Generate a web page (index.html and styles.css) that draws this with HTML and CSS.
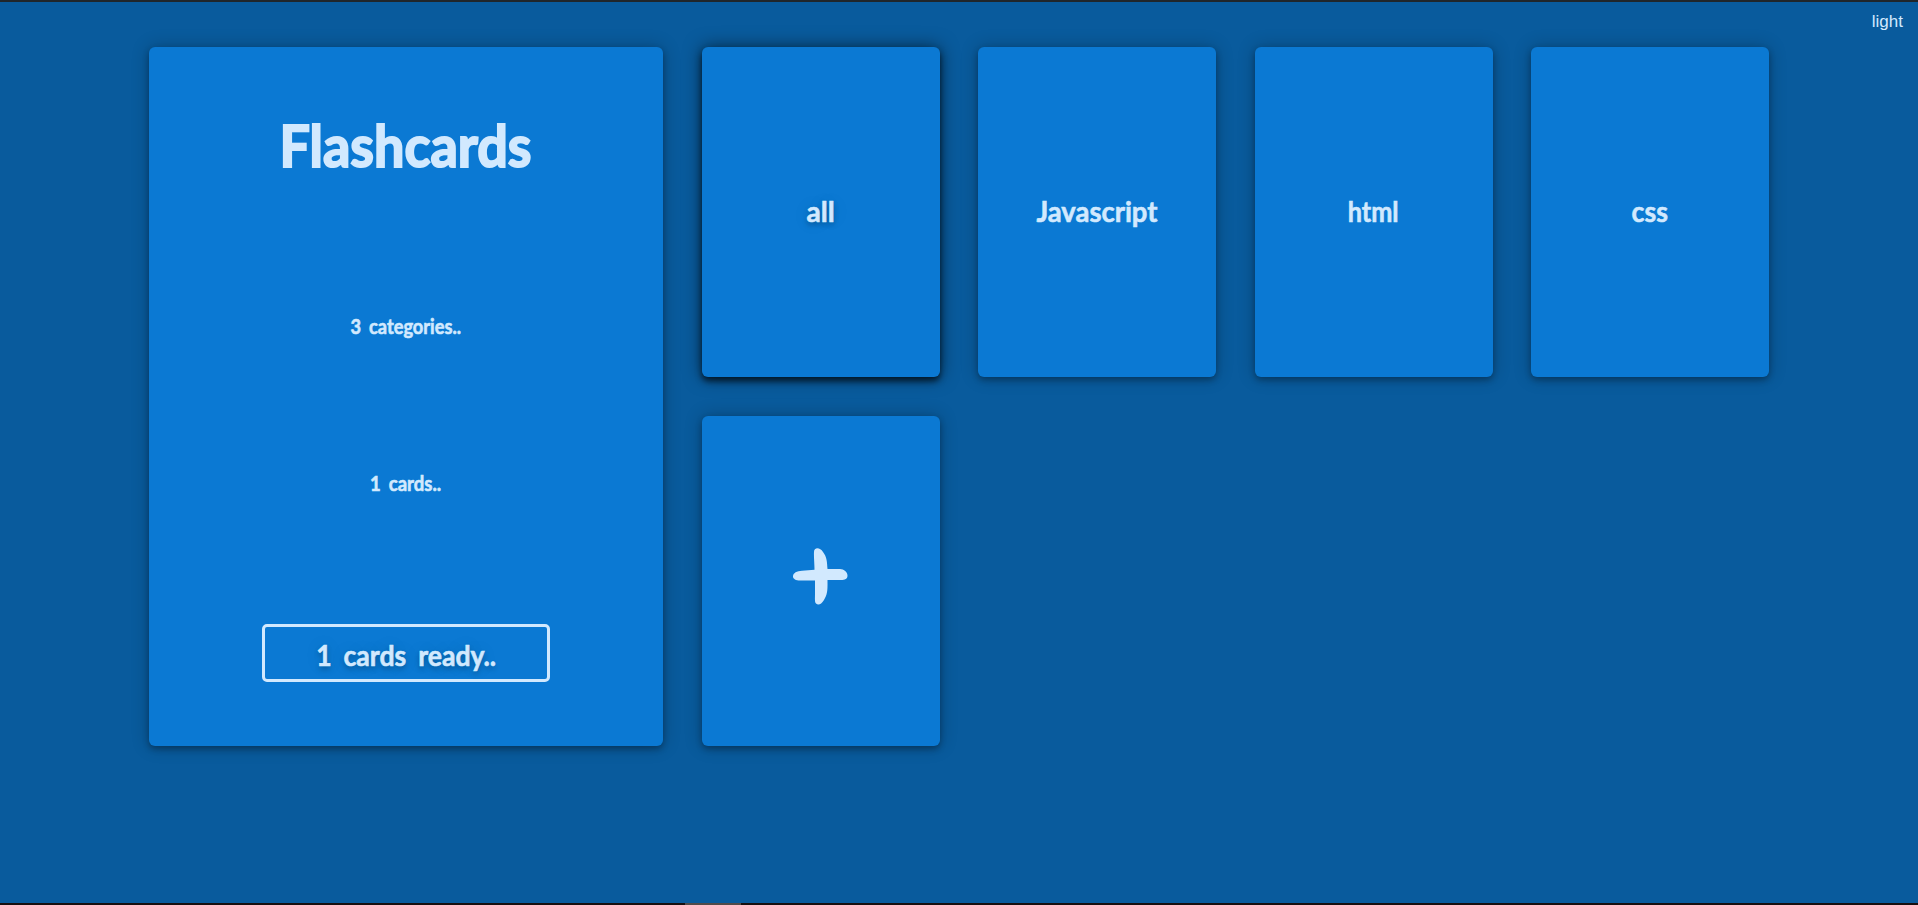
FILE: index.html
```html
<!DOCTYPE html>
<html lang="en">
<head>
<meta charset="utf-8">
<title>Flashcards</title>
<link rel="stylesheet" href="styles.css">
</head>
<body>
<div class="app">
  <header class="topbar"><button class="theme">light</button></header>
  <main class="board">
    <section class="card summary">
      <h1 class="title"><span class="label label-title">Flashcards</span></h1>
      <p class="count"><span class="label label-categories">3 categories..</span></p>
      <p class="count count-cards"><span class="label label-cards">1 cards..</span></p>
      <button class="ready"><span class="label label-ready">1 cards ready..</span></button>
    </section>
    <article class="card category selected"><span class="label label-all">all</span></article>
    <article class="card category"><span class="label label-js">Javascript</span></article>
    <article class="card category"><span class="label label-html">html</span></article>
    <article class="card category"><span class="label label-css">css</span></article>
    <article class="card add">
      <svg class="plus" viewBox="0 0 55 57" aria-label="Add category"><path d="M21 4C21-1 27-1 30 4C34 9 34 14 34.500 21H47C51 21 54.500 24 54.500 27.500C54.500 31 52 32 48 32H34.500C34.500 40 35 46 31 52C28 57 25 57.500 23 55.500C21.500 54 22 50 22 46V32.500H7C3 32.500 0 31 0 28.500C0 25 4 23 9 22.800L21.500 21.800C21.500 15 20.700 9 21 4Z"/></svg>
    </article>
  </main>
  <footer class="edge"><span class="edge-tab"></span></footer>
</div>
</body>
</html>
```
FILE: styles.css
```css
* { box-sizing: border-box; }
body { margin: 0; }
.app {
  height: 905px;
  display: flex;
  flex-direction: column;
  overflow: hidden;
  background: #095b9d;
  color: #d2e9fe;
  border-top: 2px solid #20262b;
  font-family: Lato, "Liberation Sans", sans-serif;
}
button { font: inherit; color: inherit; background: none; border: 0; padding: 0; }
.topbar { height: 45px; flex: none; display: flex; justify-content: flex-end; align-items: flex-start; padding: 10px 15px 0 0; }
.theme { font: 17px/19px "Liberation Sans", sans-serif; }
.board {
  flex: 1;
  display: grid;
  grid-template-columns: repeat(6, 238.15px);
  grid-template-rows: 330px 330px;
  gap: 39px 38.36px;
  padding-left: 148.6px;
  align-content: start;
}
.card {
  background: #0b79d3;
  border-radius: 6px;
  box-shadow: 0 3px 6px rgba(0,0,0,.3), 0 0 18px rgba(0,0,0,.24);
}
.summary { grid-column: span 2; grid-row: span 2; display: flex; flex-direction: column; align-items: center; }
.label { display: inline-block; white-space: nowrap; font-weight: 700; -webkit-text-stroke: .6px #d2e9fe; }
.title { margin: 61px 0 0; font-size: 58px; line-height: 74px; }
.count { margin: 132px 0 0; height: 28px; font-size: 20px; line-height: 25px; }
.count-cards { margin-top: 129px; }
.ready {
  width: 288px;
  height: 58px;
  margin-top: 125px;
  padding-top: 2px;
  border: 3px solid #d2e9fe;
  border-radius: 5px;
  font-size: 29px;
  text-shadow: 0 3px 5px rgba(0,0,0,.25), 0 0 18px rgba(0,0,0,.12);
}
.category, .add { display: flex; align-items: center; justify-content: center; font-size: 29px; }
.category { padding-bottom: 4px; }
.selected {
  box-shadow: 0 4px 6px rgba(0,0,0,.65), 0 0 18px rgba(0,0,0,.55);
  text-shadow: 0 3px 5px rgba(0,0,0,.25), 0 0 18px rgba(0,0,0,.12);
}
.plus { width: 55px; height: 57px; fill: #d2e9fe; margin: 0 0 9px 0; }
.label-title { transform: scaleX(.93); -webkit-text-stroke-width: 2px; }
.label-categories { word-spacing: 4px; transform: scaleX(.91); }
.label-cards { word-spacing: 4px; transform: scaleX(.925); }
.label-ready { word-spacing: 6px; transform: scaleX(.917); }
.label-all { transform: scaleX(.97); }
.label-js { transform: scaleX(.945); }
.label-html { transform: scaleX(.87); }
.label-css { transform: scaleX(.92); }
.edge { height: 2px; flex: none; background: #170f0f; padding-left: 685px; }
.edge-tab { display: block; width: 56px; height: 2px; background: #514b4a; }
```
